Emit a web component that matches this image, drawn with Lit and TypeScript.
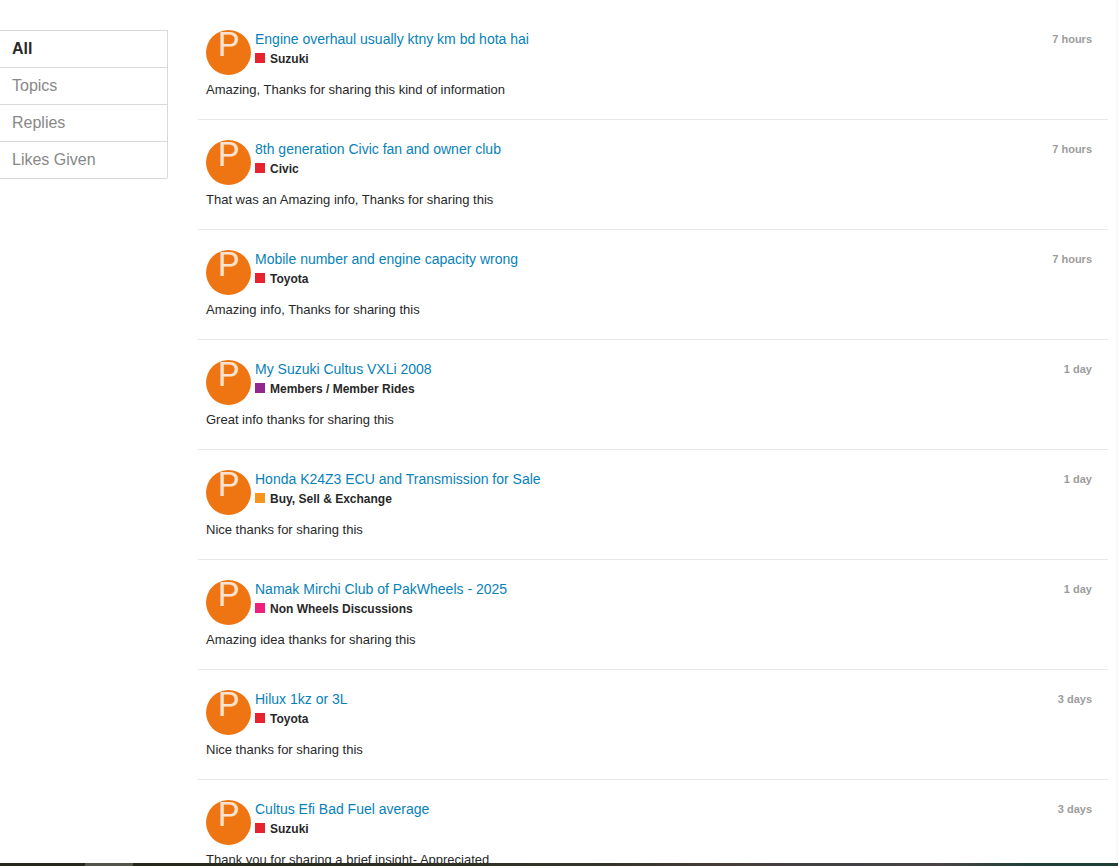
import { LitElement, html, css } from "lit";
import { customElement, property, state } from "lit/decorators.js";
import { classMap } from "lit/directives/class-map.js";

interface Activity {
  title: string;
  category: string;
  color: string;
  excerpt: string;
  age: string;
}

const RED = "#e5242f";

const ACTIVITY: Activity[] = [
  { title: "Engine overhaul usually ktny km bd hota hai", category: "Suzuki", color: RED, excerpt: "Amazing, Thanks for sharing this kind of information", age: "7 hours" },
  { title: "8th generation Civic fan and owner club", category: "Civic", color: RED, excerpt: "That was an Amazing info, Thanks for sharing this", age: "7 hours" },
  { title: "Mobile number and engine capacity wrong", category: "Toyota", color: RED, excerpt: "Amazing info, Thanks for sharing this", age: "7 hours" },
  { title: "My Suzuki Cultus VXLi 2008", category: "Members / Member Rides", color: "#92278f", excerpt: "Great info thanks for sharing this", age: "1 day" },
  { title: "Honda K24Z3 ECU and Transmission for Sale", category: "Buy, Sell & Exchange", color: "#f7941d", excerpt: "Nice thanks for sharing this", age: "1 day" },
  { title: "Namak Mirchi Club of PakWheels - 2025", category: "Non Wheels Discussions", color: "#ed207b", excerpt: "Amazing idea thanks for sharing this", age: "1 day" },
  { title: "Hilux 1kz or 3L", category: "Toyota", color: RED, excerpt: "Nice thanks for sharing this", age: "3 days" },
  { title: "Cultus Efi Bad Fuel average", category: "Suzuki", color: RED, excerpt: "Thank you for sharing a brief insight- Appreciated", age: "3 days" },
];

@customElement("activity-item")
export class ActivityItem extends LitElement {
  @property({ attribute: false }) item!: Activity;

  static styles = css`
    :host {
      display: block;
      padding: 20px 16px 20px 8px;
      border-bottom: 1px solid #e9e9e9;
    }
    .head {
      display: flex;
      gap: 4px;
      height: 45px;
    }
    .avatar {
      flex: none;
      width: 45px;
      height: 45px;
      border-radius: 50%;
      background: #ee7512;
      color: #fce3d0;
      font: 400 34px/28px Roboto, sans-serif;
      text-align: center;
      text-decoration: none;
    }
    .info {
      flex: 1;
      min-width: 0;
    }
    .title {
      display: block;
      font-size: 14px;
      line-height: 19px;
      color: #0782b8;
      text-decoration: none;
    }
    .category {
      display: flex;
      gap: 5px;
      font-size: 12px;
      font-weight: bold;
      line-height: 20px;
      color: #282828;
      text-decoration: none;
    }
    .swatch {
      width: 10px;
      height: 10px;
      margin-top: 4px;
    }
    .age {
      font-size: 11px;
      font-weight: bold;
      line-height: 19px;
      color: #9c9c9c;
    }
    .excerpt {
      margin: 5px 0 0;
      font-size: 13px;
      line-height: 19px;
      color: #282828;
    }
  `;

  render() {
    const { title, category, color, excerpt, age } = this.item;
    return html`
      <div class="head">
        <a class="avatar" href="#user">P</a>
        <div class="info">
          <a class="title" href="#topic">${title}</a>
          <a class="category" href="#category">
            <span class="swatch" style="background:${color}"></span>${category}
          </a>
        </div>
        <time class="age">${age}</time>
      </div>
      <p class="excerpt">${excerpt}</p>
    `;
  }
}

@customElement("app-root")
export class AppRoot extends LitElement {
  @state() private filter = "All";

  static styles = css`
    :host {
      display: flex;
      flex-direction: column;
      height: 100vh;
      background: #fff;
      font-family: "Liberation Sans", Arial, sans-serif;
    }
    .page {
      flex: 1;
      min-height: 0;
      display: flex;
      gap: 30px;
      overflow: hidden;
      padding-right: 8px;
      border-right: 2px solid #f8f8f8;
    }
    .nav {
      flex: none;
      width: 168px;
      box-sizing: border-box;
      align-self: flex-start;
      margin: 30px 0 0;
      border: 1px solid #d9d9d9;
      border-left: 0;
      border-bottom-right-radius: 2px;
    }
    .link {
      display: block;
      padding: 0 12px;
      font-size: 16px;
      line-height: 36px;
      color: #888;
      text-decoration: none;
    }
    .link + .link {
      border-top: 1px solid #d9d9d9;
    }
    .active {
      font-weight: bold;
      color: #282828;
    }
    .stream {
      flex: 1;
      min-width: 0;
      padding-top: 10px;
    }
    .taskbar {
      flex: none;
      height: 3px;
      background: linear-gradient(90deg, #24271a 0 85px, #53544a 85px 133px, #24271a 133px, #35342a 55%, #463d39 65%, #404144 76%, #4a4443 84%, #1f3f38 92%, #1d3f36);
    }
  `;

  private select(event: Event, name: string) {
    event.preventDefault();
    this.filter = name;
  }

  render() {
    return html`
      <div class="page">
        <nav class="nav">
          ${["All", "Topics", "Replies", "Likes Given"].map(
            (name) => html`<a
              class=${classMap({ link: true, active: this.filter === name })}
              href="#activity"
              @click=${(e: Event) => this.select(e, name)}
              >${name}</a
            >`
          )}
        </nav>
        <main class="stream">
          ${ACTIVITY.map((item) => html`<activity-item .item=${item}></activity-item>`)}
        </main>
      </div>
      <div class="taskbar"></div>
    `;
  }
}
